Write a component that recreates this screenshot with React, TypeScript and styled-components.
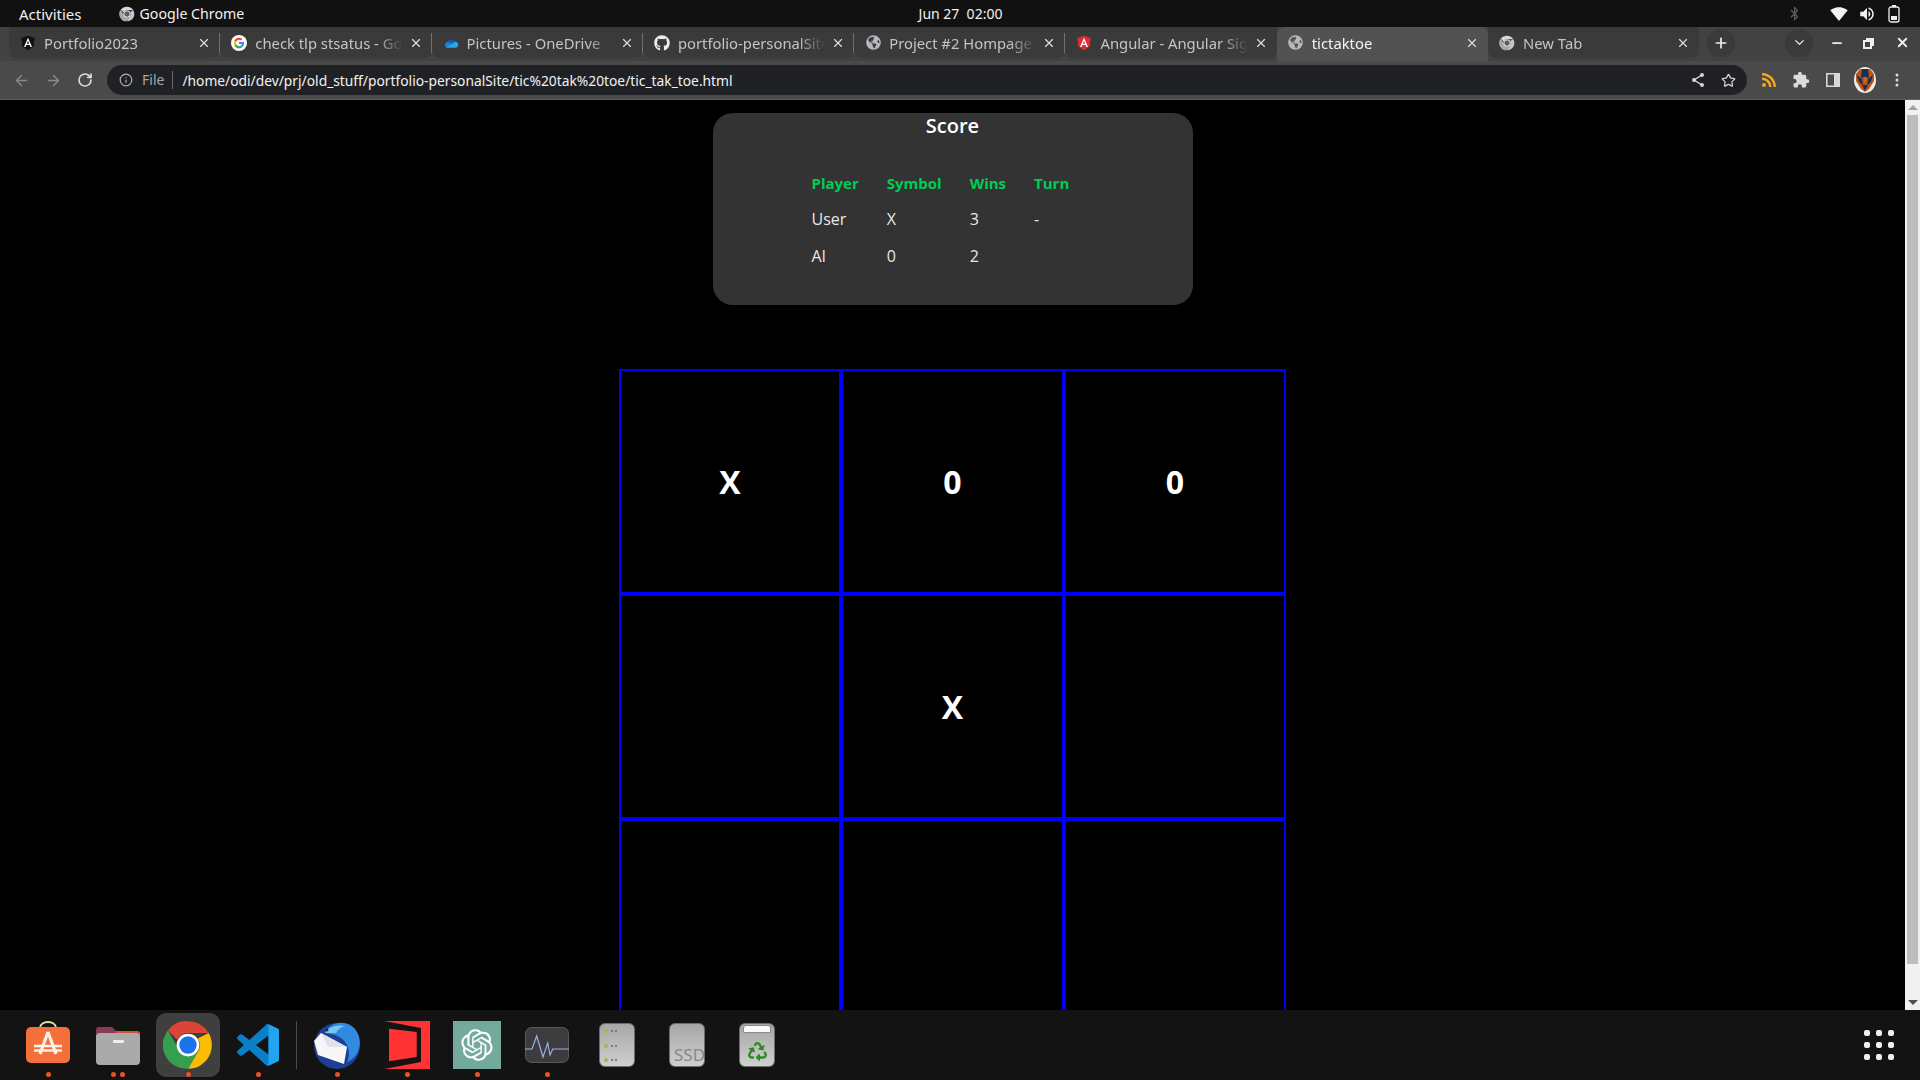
import styled, { createGlobalStyle } from "styled-components";
import { ArrowLeft, ArrowRight, RotateCw, Star, X, Plus, ChevronDown, Minus, Info } from "lucide-react";
import { FaGithub, FaGlobeAmericas, FaBluetoothB, FaRecycle, FaRss } from "react-icons/fa";
import { MdExtension, MdSignalWifi4Bar, MdVolumeUp } from "react-icons/md";
import { RiOpenaiFill } from "react-icons/ri";
import { BsThreeDotsVertical } from "react-icons/bs";

const GlobalStyle = createGlobalStyle`
    html, body {
        margin: 0;
        height: 100%;
        background: #000;
        overflow: hidden;
    }
    * {
        box-sizing: border-box;
    }
`;

const Screen = styled.div`
    width: 1920px;
    height: 1080px;
    display: flex;
    flex-direction: column;
    overflow: hidden;
    font-family: "Noto Sans", "Open Sans", sans-serif;
`;

const TopBar = styled.header`
    height: 27px;
    flex: none;
    background: #111111;
    color: #f0f0f0;
    font-size: 15px;
    display: grid;
    grid-template-columns: 1fr auto 1fr;
    align-items: center;
    padding: 0 20px 0 19px;
`;

const TopLeft = styled.div`
    display: flex;
    align-items: center;
`;

const AppName = styled.span`
    display: flex;
    align-items: center;
    gap: 5px;
    margin-left: 37px;
    font-size: 14.2px;
`;

const Clock = styled.span`
    white-space: pre;
    font-size: 14px;
    margin-left: 2px;
`;

const StatusIcons = styled.div`
    display: flex;
    align-items: center;
    justify-content: flex-end;
    color: #f2f2f2;
`;

const StatusSlot = styled.span<{ $gap?: number; $dim?: boolean }>`
    display: flex;
    margin-left: ${(props) => props.$gap ?? 0}px;
    color: ${(props) => (props.$dim ? "#5e5e5e" : "inherit")};
`;

const TabStrip = styled.div`
    height: 34px;
    flex: none;
    background: #424242;
    display: flex;
    align-items: flex-end;
    padding-left: 9px;
`;

const Tab = styled.div<{ $active?: boolean; $plain?: boolean }>`
    position: relative;
    width: 211.3px;
    height: ${(props) => (props.$active ? "34px" : "31px")};
    align-self: flex-start;
    flex: none;
    display: flex;
    align-items: center;
    padding: ${(props) => (props.$active ? "0 9px 3px 11px" : "0 9px 0 11px")};
    border-radius: ${(props) => (props.$active ? "8px 8px 0 0" : "0 0 8px 8px")};
    background: ${(props) => (props.$active ? "#525252" : "#3a3a3a")};
    color: ${(props) => (props.$active ? "#f4f4f4" : "#c4c4c4")};
    font-size: 14.8px;
    &::after {
        content: "";
        display: ${(props) => (props.$plain ? "none" : "block")};
        position: absolute;
        right: 0;
        top: 6px;
        height: 20px;
        width: 1px;
        background: #707070;
    }
`;

const Favicon = styled.span`
    width: 16px;
    height: 16px;
    flex: none;
    display: flex;
    align-items: center;
    justify-content: center;
    color: #b5b8bc;
`;

const TabTitle = styled.span`
    flex: 1;
    min-width: 0;
    margin-left: 8px;
    white-space: nowrap;
    overflow: hidden;
    -webkit-mask-image: linear-gradient(90deg, #000 82%, transparent 100%);
    mask-image: linear-gradient(90deg, #000 82%, transparent 100%);
`;

const TabClose = styled.span`
    display: flex;
    margin-left: 6px;
    color: #dddddd;
`;

const WindowButtons = styled.div`
    display: flex;
    align-items: center;
    height: 31px;
    align-self: flex-start;
    flex: 1;
    color: #efefef;
`;

const StripButton = styled.span<{ $round?: boolean; $left: number }>`
    display: flex;
    align-items: center;
    justify-content: center;
    width: 28px;
    height: 28px;
    margin-left: ${(props) => props.$left}px;
    border-radius: 50%;
    background: ${(props) => (props.$round ? "#3a3a3a" : "transparent")};
`;

const Toolbar = styled.div`
    height: 39px;
    flex: none;
    background: #4a4a4a;
    border-bottom: 1px solid #5e5e5e;
    display: flex;
    align-items: center;
    color: #d7d7d7;
`;

const NavButton = styled.span<{ $dim?: boolean; $left: number }>`
    display: flex;
    margin-left: ${(props) => props.$left}px;
    color: ${(props) => (props.$dim ? "#8a8a8a" : "#dcdcdc")};
`;

const Omnibox = styled.div`
    width: 1640px;
    height: 30px;
    margin-left: 14px;
    border-radius: 15px;
    background: #202124;
    display: flex;
    align-items: center;
    padding-left: 12px;
    padding-right: 11px;
    font-size: 13.8px;
`;

const SchemeLabel = styled.span`
    color: #a5a7aa;
    margin-left: 9px;
    padding-right: 8px;
    border-right: 1px solid #6d6d6d;
    line-height: 18px;
    font-size: 14px;
`;

const Url = styled.span`
    color: #f2f2f2;
    margin-left: 9px;
    flex: 1;
    white-space: nowrap;
`;

const OmniActions = styled.span`
    display: flex;
    align-items: center;
    gap: 16px;
    color: #d5d5d5;
`;

const Viewport = styled.main`
    flex: 1;
    min-height: 0;
    display: flex;
    background: #000;
`;

const Page = styled.div`
    flex: 1;
    min-width: 0;
    overflow: hidden;
    padding-top: 13px;
    color: #fff;
    font-family: "Open Sans", "Noto Sans", sans-serif;
`;

const ScoreCard = styled.section`
    width: 480px;
    height: 192px;
    margin: 0 auto;
    background: #333333;
    border-radius: 20px;
    padding-top: 1px;
`;

const ScoreTitle = styled.h2`
    margin: 0;
    font-size: 20px;
    line-height: 24px;
    font-weight: 600;
    text-align: center;
`;

const ScoreTable = styled.table`
    border-collapse: collapse;
    margin: 28px 0 0 85px;
    font-size: 16px;
`;

const HeadCell = styled.th`
    padding: 8px 14px;
    color: #00cc55;
    font-size: 15px;
    font-weight: 700;
    text-align: left;
    line-height: 19px;
`;

const Cell = styled.td`
    padding: 7px 14px 8px;
    color: #e8e8e8;
    line-height: 22px;
`;

const Board = styled.div`
    width: 667px;
    margin: 64px auto 0;
    display: grid;
    grid-template-columns: 222px 223px 222px;
    grid-auto-rows: 225px;
`;

const Square = styled.div`
    border: 2px solid #0000ff;
    display: flex;
    align-items: center;
    justify-content: center;
    font-size: 32px;
    font-weight: 700;
    color: #fff;
`;

const Scrollbar = styled.aside`
    width: 15px;
    flex: none;
    background: #f1f1f1;
    display: flex;
    flex-direction: column;
    align-items: center;
    padding: 5px 0 5px;
`;

const ScrollThumb = styled.div`
    width: 11px;
    height: 849px;
    margin-top: 5px;
    background: #bdbdbd;
`;

const ScrollArrow = styled.span<{ $down?: boolean }>`
    width: 0;
    height: 0;
    flex: none;
    border-left: 5px solid transparent;
    border-right: 5px solid transparent;
    ${(props) =>
        props.$down
            ? "border-top: 5px solid #505050; margin-top: auto;"
            : "border-bottom: 5px solid #a3a3a3;"}
`;

const Dock = styled.footer`
    height: 70px;
    flex: none;
    background: #131313;
    display: flex;
    align-items: center;
    padding: 0 26px 0 13px;
`;

const DockSlot = styled.div<{ $lift?: number }>`
    position: relative;
    width: 70px;
    height: 70px;
    flex: none;
    display: flex;
    align-items: center;
    justify-content: center;
    padding-bottom: ${(props) => props.$lift ?? 0}px;
`;

const DockHighlight = styled.div`
    width: 64px;
    height: 64px;
    border-radius: 10px;
    background: #3f3f3f;
    display: flex;
    align-items: center;
    justify-content: center;
`;

const RunDots = styled.div`
    position: absolute;
    left: 0;
    right: 0;
    bottom: 3px;
    display: flex;
    justify-content: center;
    gap: 4px;
`;

const RunDot = styled.span`
    width: 5px;
    height: 5px;
    border-radius: 50%;
    background: #e95420;
`;

const DockDivider = styled.div`
    width: 1px;
    height: 48px;
    margin: 0 5px 0 3px;
    background: #4c4c4c;
    flex: none;
`;

const AiTile = styled.div`
    width: 48px;
    height: 48px;
    background: #74aa9c;
    color: #fff;
    display: flex;
    align-items: center;
    justify-content: center;
`;

const DriveTile = styled.div`
    position: relative;
    width: 36px;
    height: 44px;
    border-radius: 6px;
    border: 1px solid #6c6c6c;
    background: linear-gradient(#a6a6a6, #cfcfcf);
    overflow: hidden;
`;

const DriveRows = styled.div`
    height: 100%;
    padding: 5px 0 4px 4px;
    display: flex;
    flex-direction: column;
    justify-content: space-between;
`;

const DriveRow = styled.div`
    display: flex;
    align-items: center;
    gap: 2px;
    &::before {
        content: "";
        width: 4px;
        height: 4px;
        margin-right: 1px;
        border-radius: 50%;
        background: #a6b84a;
    }
`;

const DriveDot = styled.span`
    width: 2px;
    height: 2px;
    background: #7c7c7c;
`;

const SsdLabel = styled.span`
    position: absolute;
    left: 4px;
    bottom: 1px;
    font-size: 17px;
    line-height: 20px;
    color: #888888;
    white-space: nowrap;
`;

const TrashLid = styled.div`
    height: 8px;
    margin: 1px 3px 0;
    background: #fafafa;
    border: 1px solid #8a8a8a;
    border-radius: 3px 3px 1px 1px;
`;

const TrashMark = styled.div`
    display: flex;
    justify-content: center;
    margin-top: 9px;
    color: #2e8b22;
`;

const AppGrid = styled.div`
    margin-left: auto;
    display: grid;
    grid-template-columns: repeat(3, 6px);
    gap: 6px;
`;

const AppGridDot = styled.span`
    width: 6px;
    height: 6px;
    border-radius: 2px;
    background: #efefef;
`;

function ChromeLogo({ size, mono }: { size: number; mono?: boolean }) {
    const red = mono ? "#d8d8d8" : "#db4437";
    const yellow = mono ? "#c6c6c6" : "#fbbc04";
    const green = mono ? "#a8a8a8" : "#34a04f";
    const blue = mono ? "#5f5f5f" : "#1a73e8";
    return (
        <svg width={size} height={size} viewBox="0 0 48 48">
            <path d="M24 2a22 22 0 0 1 19.05 11H24a11 11 0 0 0-9.9 6.2L5.4 10.5A22 22 0 0 1 24 2z" fill={red} />
            <path d="M43.05 13A22 22 0 0 1 24 46l9.5-16.5A11 11 0 0 0 33 18z" fill={yellow} />
            <path d="M5.4 10.5 14.9 27a11 11 0 0 0 18.6 2.5L24 46A22 22 0 0 1 5.4 10.5z" fill={green} />
            <circle cx="24" cy="24" r="10.5" fill="#fff" />
            <circle cx="24" cy="24" r="8" fill={blue} />
        </svg>
    );
}

function GoogleLogo() {
    return (
        <svg width="16" height="16" viewBox="0 0 48 48">
            <circle cx="24" cy="24" r="24" fill="#fff" />
            <path d="M39 24.5c0-1.2-.1-2.2-.3-3.2H24v6h8.4c-.4 2-1.5 3.6-3.2 4.7l5 3.9c3-2.7 4.8-6.7 4.8-11.4z" fill="#4285f4" />
            <path d="M24 40c4.3 0 7.9-1.4 10.2-3.9l-5-3.9c-1.3.9-3 1.4-5.2 1.4-4 0-7.4-2.7-8.6-6.3l-5.1 4C12.8 36.6 18 40 24 40z" fill="#34a853" />
            <path d="M15.4 27.3c-.6-2-.6-4.6 0-6.6l-5.1-4a16 16 0 0 0 0 14.6z" fill="#fbbc05" />
            <path d="M24 14.3c2.3 0 4.3.8 5.9 2.3l4.4-4.4C31.6 9.7 28.1 8 24 8c-6 0-11.2 3.4-13.7 8.7l5.1 4c1.2-3.7 4.6-6.4 8.6-6.4z" fill="#ea4335" />
        </svg>
    );
}

function OneDriveLogo() {
    return (
        <svg width="17" height="16" viewBox="0 0 24 24">
            <path d="M9.5 7.5a6 6 0 0 1 8.2 2.5l-4.2 3-6.300-3a6 6 0 0 1 2.300-2.500z" fill="#0a5fc0" />
            <path d="M7.2 10A5 5 0 0 0 5 19h3l5.5-6z" fill="#1682d8" />
            <path d="M17.7 10a4.6 4.6 0 0 1 3.7 8c-.6.7-1.400 1-2.400 1H5l8.500-6z" fill="#2aa7ea" />
        </svg>
    );
}

function AngularLogo({ dark }: { dark?: boolean }) {
    return (
        <svg width="16" height="16" viewBox="0 0 24 24">
            <path d="M12 1 2 4.6l1.6 13.200L12 23l8.400-5.200L22 4.600z" fill={dark ? "#111" : "#dd2c35"} />
            <path d="M12 4 6 18h2.300l1.200-3h5l1.200 3H18zm-1.700 9L12 8.800l1.700 4.200z" fill="#fff" />
        </svg>
    );
}

function AppCenterIcon() {
    return (
        <svg width="44" height="42" viewBox="0 0 44 42">
            <path d="M14 7c0-8 16-8 16 0" fill="none" stroke="#f2d9b0" strokeWidth="1.8" />
            <rect x="0" y="6" width="44" height="36" rx="5" fill="#f4703a" />
            <path d="M22 11 14 33M22 11l8 22" stroke="#fdf1ea" strokeWidth="3.2" fill="none" />
            <path d="M8 25h28M8 29.5h28" stroke="#fdf1ea" strokeWidth="2.4" />
        </svg>
    );
}

function FilesIcon() {
    return (
        <svg width="44" height="40" viewBox="0 0 44 40">
            <path d="M0 5a3 3 0 0 1 3-3h13l4 4h21a3 3 0 0 1 3 3v10H0z" fill="#8a3a56" />
            <path d="M20 6h21a3 3 0 0 1 3 3v6H20z" fill="#c9583a" />
            <rect x="0" y="8" width="44" height="32" rx="4" fill="#aaaaaa" />
            <rect x="17" y="15" width="11" height="3" rx="1" fill="#eeeeee" />
        </svg>
    );
}

function VsCodeIcon() {
    return (
        <svg width="42" height="42" viewBox="0 0 100 100">
            <path
                fillRule="evenodd"
                fill="#0a7fc8"
                d="M70.9 99.3c1.6.6 3.4.6 5-.2l20.6-9.9c2.1-1 3.5-3.2 3.5-5.6V16.4c0-2.4-1.4-4.6-3.5-5.6L75.9.9c-2.1-1-4.5-.8-6.4.5-.3.2-.5.4-.7.7L29.4 38 12.2 25c-1.6-1.2-3.8-1.1-5.3.2l-5.500 5c-1.800 1.700-1.800 4.500 0 6.200L16.200 50 1.400 63.600c-1.800 1.700-1.800 4.500 0 6.200l5.500 5c1.500 1.300 3.700 1.400 5.300.2L29.400 62l39.400 35.900c.6.6 1.300 1.100 2.100 1.400zM75 27.300 45.100 50 75 72.700z"
            />
            <path d="M75 .5 96.500 10.800c2.100 1 3.500 3.200 3.500 5.600v67.200c0 2.400-1.400 4.600-3.500 5.600L75 99.500z" fill="#24a3f0" />
        </svg>
    );
}

function ThunderbirdIcon() {
    return (
        <svg width="48" height="48" viewBox="0 0 48 48">
            <circle cx="24" cy="25" r="23" fill="#1f3f96" />
            <path d="M12 12C16 2 30-2 40 6c8 7 9 20 3 28-3 4-6 6-9 7 4-8 2-18-6-24-5-4-11-4-16-5z" fill="#2f8ae0" />
            <path d="M12 12c3-6 12-9 20-7-4 1-7 3-9 7z" fill="#7cc4f2" />
            <path d="M1 20 8 12l26 14-3 17L5 34z" fill="#f7f7f7" />
            <path d="M8 12l7 14 19 0z" fill="#dfe3ea" />
            <circle cx="14" cy="9" r="1.4" fill="#0d2c63" />
        </svg>
    );
}

function RedBookIcon() {
    return (
        <svg width="46" height="48" viewBox="0 0 46 48">
            <path d="M0 0H46V48H0L37 41V7z" fill="#ff3333" />
            <path d="M5 7.7 32.7 11V36L5 40.3z" fill="#ff3333" />
        </svg>
    );
}

function MonitorIcon() {
    return (
        <svg width="44" height="36" viewBox="0 0 44 36">
            <rect x=".5" y=".5" width="43" height="35" rx="6" fill="#3c3c3e" stroke="#5a5a5a" />
            <path d="M0 22H7L11.7 9 18 30 22.7 16 25 28 27.7 22H44" fill="none" stroke="#9ab0e0" strokeWidth="1.2" />
        </svg>
    );
}

function BatteryIcon() {
    return (
        <svg width="12" height="18" viewBox="0 0 12 18">
            <rect x="4" y="0" width="4" height="2" fill="#f0f0f0" />
            <rect x="1" y="2" width="10" height="15" rx="2" fill="none" stroke="#f0f0f0" strokeWidth="1.3" />
            <rect x="3" y="11" width="6" height="4" fill="#f0f0f0" />
        </svg>
    );
}

function RestoreIcon() {
    return (
        <svg width="12" height="12" viewBox="0 0 12 12">
            <path d="M3 1h8v8H9V3H3z" fill="#efefef" />
            <path d="M1 4h7v7H1z" fill="none" stroke="#efefef" strokeWidth="2" />
        </svg>
    );
}

function SidePanelIcon() {
    return (
        <svg width="14" height="14" viewBox="0 0 14 14">
            <path d="M.8.8h12.4v12.4H.8z" fill="none" stroke="#d7d7d7" strokeWidth="1.6" />
            <path d="M8 1h5v12H8z" fill="#d7d7d7" />
        </svg>
    );
}

function ShareIcon() {
    return (
        <svg width="14" height="16" viewBox="0 0 14 16">
            <path d="M11 3 3 8l8 5" fill="none" stroke="#d5d5d5" strokeWidth="1.4" />
            <circle cx="11" cy="3" r="2" fill="#d5d5d5" />
            <circle cx="3" cy="8" r="2" fill="#d5d5d5" />
            <circle cx="11" cy="13" r="2" fill="#d5d5d5" />
        </svg>
    );
}

function Avatar() {
    return (
        <svg width="22" height="26" viewBox="0 0 22 26">
            <ellipse cx="11" cy="13" rx="11" ry="13" fill="#eeeae6" />
            <path d="M2 7 6 2h10l4 5 0 7-5 8-4 3-4-3-5-8z" fill="#b9551a" />
            <path d="M8 2h6l1 8-4 3-4-3zM3 8l5 4 1 6-4-3zM19 8l-5 4-1 6 4-3zM8 18h6l-3 6z" fill="#1c2f52" />
            <path d="M9 10h4l-1 5h-2z" fill="#d4661c" />
        </svg>
    );
}

interface ITab {
    title: string;
    icon: React.ReactNode;
    active?: boolean;
    plain?: boolean;
}

const tabs: ITab[] = [
    { title: "Portfolio2023", icon: <AngularLogo dark /> },
    { title: "check tlp stsatus - Goo", icon: <GoogleLogo /> },
    { title: "Pictures - OneDrive", icon: <OneDriveLogo /> },
    { title: "portfolio-personalSite", icon: <FaGithub size={16} color="#eeeeee" /> },
    { title: "Project #2 Hompage", icon: <FaGlobeAmericas size={15} /> },
    { title: "Angular - Angular Sign", icon: <AngularLogo />, plain: true },
    { title: "tictaktoe", icon: <FaGlobeAmericas size={15} />, active: true, plain: true },
    { title: "New Tab", icon: <ChromeLogo size={16} mono />, plain: true },
];

const board = ["X", "0", "0", "", "X", "", "", "", ""];

function DriveIcon() {
    return (
        <DriveTile>
            <DriveRows>
                {[0, 1, 2].map((row) => (
                    <DriveRow key={row}>
                        <DriveDot />
                        <DriveDot />
                    </DriveRow>
                ))}
            </DriveRows>
        </DriveTile>
    );
}

function App() {
    return (
        <Screen>
            <GlobalStyle />
            <TopBar>
                <TopLeft>
                    <span>Activities</span>
                    <AppName>
                        <ChromeLogo size={16} mono />
                        Google Chrome
                    </AppName>
                </TopLeft>
                <Clock>Jun 27  02:00</Clock>
                <StatusIcons>
                    <StatusSlot $dim>
                        <FaBluetoothB size={15} />
                    </StatusSlot>
                    <StatusSlot $gap={28}>
                        <MdSignalWifi4Bar size={18} />
                    </StatusSlot>
                    <StatusSlot $gap={10}>
                        <MdVolumeUp size={18} />
                    </StatusSlot>
                    <StatusSlot $gap={12}>
                        <BatteryIcon />
                    </StatusSlot>
                </StatusIcons>
            </TopBar>
            <TabStrip>
                {tabs.map((tab) => (
                    <Tab key={tab.title} $active={tab.active} $plain={tab.plain}>
                        <Favicon>{tab.icon}</Favicon>
                        <TabTitle>{tab.title}</TabTitle>
                        <TabClose>
                            <X size={14} strokeWidth={2} />
                        </TabClose>
                    </Tab>
                ))}
                <WindowButtons>
                    <StripButton $round $left={8}>
                        <Plus size={16} strokeWidth={2.5} />
                    </StripButton>
                    <StripButton $round $left={50}>
                        <ChevronDown size={15} />
                    </StripButton>
                    <StripButton $left={10}>
                        <Minus size={14} strokeWidth={3} />
                    </StripButton>
                    <StripButton $left={4}>
                        <RestoreIcon />
                    </StripButton>
                    <StripButton $left={5}>
                        <X size={15} strokeWidth={3} />
                    </StripButton>
                </WindowButtons>
            </TabStrip>
            <Toolbar>
                <NavButton $dim $left={13}>
                    <ArrowLeft size={17} />
                </NavButton>
                <NavButton $dim $left={15}>
                    <ArrowRight size={17} />
                </NavButton>
                <NavButton $left={15}>
                    <RotateCw size={16} strokeWidth={2.5} />
                </NavButton>
                <Omnibox>
                    <Info size={14} color="#b0b2b5" />
                    <SchemeLabel>File</SchemeLabel>
                    <Url>/home/odi/dev/prj/old_stuff/portfolio-personalSite/tic%20tak%20toe/tic_tak_toe.html</Url>
                    <OmniActions>
                        <ShareIcon />
                        <Star size={15} strokeWidth={2} />
                    </OmniActions>
                </Omnibox>
                <NavButton $left={14}>
                    <FaRss size={16} color="#f5a623" />
                </NavButton>
                <NavButton $left={15}>
                    <MdExtension size={18} />
                </NavButton>
                <NavButton $left={16}>
                    <SidePanelIcon />
                </NavButton>
                <NavButton $left={14}>
                    <Avatar />
                </NavButton>
                <NavButton $left={13}>
                    <BsThreeDotsVertical size={16} />
                </NavButton>
            </Toolbar>
            <Viewport>
                <Page>
                    <ScoreCard>
                        <ScoreTitle>Score</ScoreTitle>
                        <ScoreTable>
                            <thead>
                                <tr>
                                    <HeadCell>Player</HeadCell>
                                    <HeadCell>Symbol</HeadCell>
                                    <HeadCell>Wins</HeadCell>
                                    <HeadCell>Turn</HeadCell>
                                </tr>
                            </thead>
                            <tbody>
                                <tr>
                                    <Cell>User</Cell>
                                    <Cell>X</Cell>
                                    <Cell>3</Cell>
                                    <Cell>-</Cell>
                                </tr>
                                <tr>
                                    <Cell>AI</Cell>
                                    <Cell>0</Cell>
                                    <Cell>2</Cell>
                                    <Cell></Cell>
                                </tr>
                            </tbody>
                        </ScoreTable>
                    </ScoreCard>
                    <Board>
                        {board.map((value, index) => (
                            <Square key={index}>{value}</Square>
                        ))}
                    </Board>
                </Page>
                <Scrollbar>
                    <ScrollArrow />
                    <ScrollThumb />
                    <ScrollArrow $down />
                </Scrollbar>
            </Viewport>
            <Dock>
                <DockSlot $lift={6}>
                    <AppCenterIcon />
                    <RunDots>
                        <RunDot />
                    </RunDots>
                </DockSlot>
                <DockSlot>
                    <FilesIcon />
                    <RunDots>
                        <RunDot />
                        <RunDot />
                    </RunDots>
                </DockSlot>
                <DockSlot>
                    <DockHighlight>
                        <ChromeLogo size={52} />
                    </DockHighlight>
                    <RunDots>
                        <RunDot />
                    </RunDots>
                </DockSlot>
                <DockSlot>
                    <VsCodeIcon />
                    <RunDots>
                        <RunDot />
                    </RunDots>
                </DockSlot>
                <DockDivider />
                <DockSlot>
                    <ThunderbirdIcon />
                    <RunDots>
                        <RunDot />
                    </RunDots>
                </DockSlot>
                <DockSlot>
                    <RedBookIcon />
                    <RunDots>
                        <RunDot />
                    </RunDots>
                </DockSlot>
                <DockSlot>
                    <AiTile>
                        <RiOpenaiFill size={38} />
                    </AiTile>
                    <RunDots>
                        <RunDot />
                    </RunDots>
                </DockSlot>
                <DockSlot>
                    <MonitorIcon />
                    <RunDots>
                        <RunDot />
                    </RunDots>
                </DockSlot>
                <DockSlot>
                    <DriveIcon />
                </DockSlot>
                <DockSlot>
                    <DriveTile>
                        <SsdLabel>SSD</SsdLabel>
                    </DriveTile>
                </DockSlot>
                <DockSlot>
                    <DriveTile>
                        <TrashLid />
                        <TrashMark>
                            <FaRecycle size={19} />
                        </TrashMark>
                    </DriveTile>
                </DockSlot>
                <AppGrid>
                    {Array.from({ length: 9 }).map((_, index) => (
                        <AppGridDot key={index} />
                    ))}
                </AppGrid>
            </Dock>
        </Screen>
    );
}

export default App;
